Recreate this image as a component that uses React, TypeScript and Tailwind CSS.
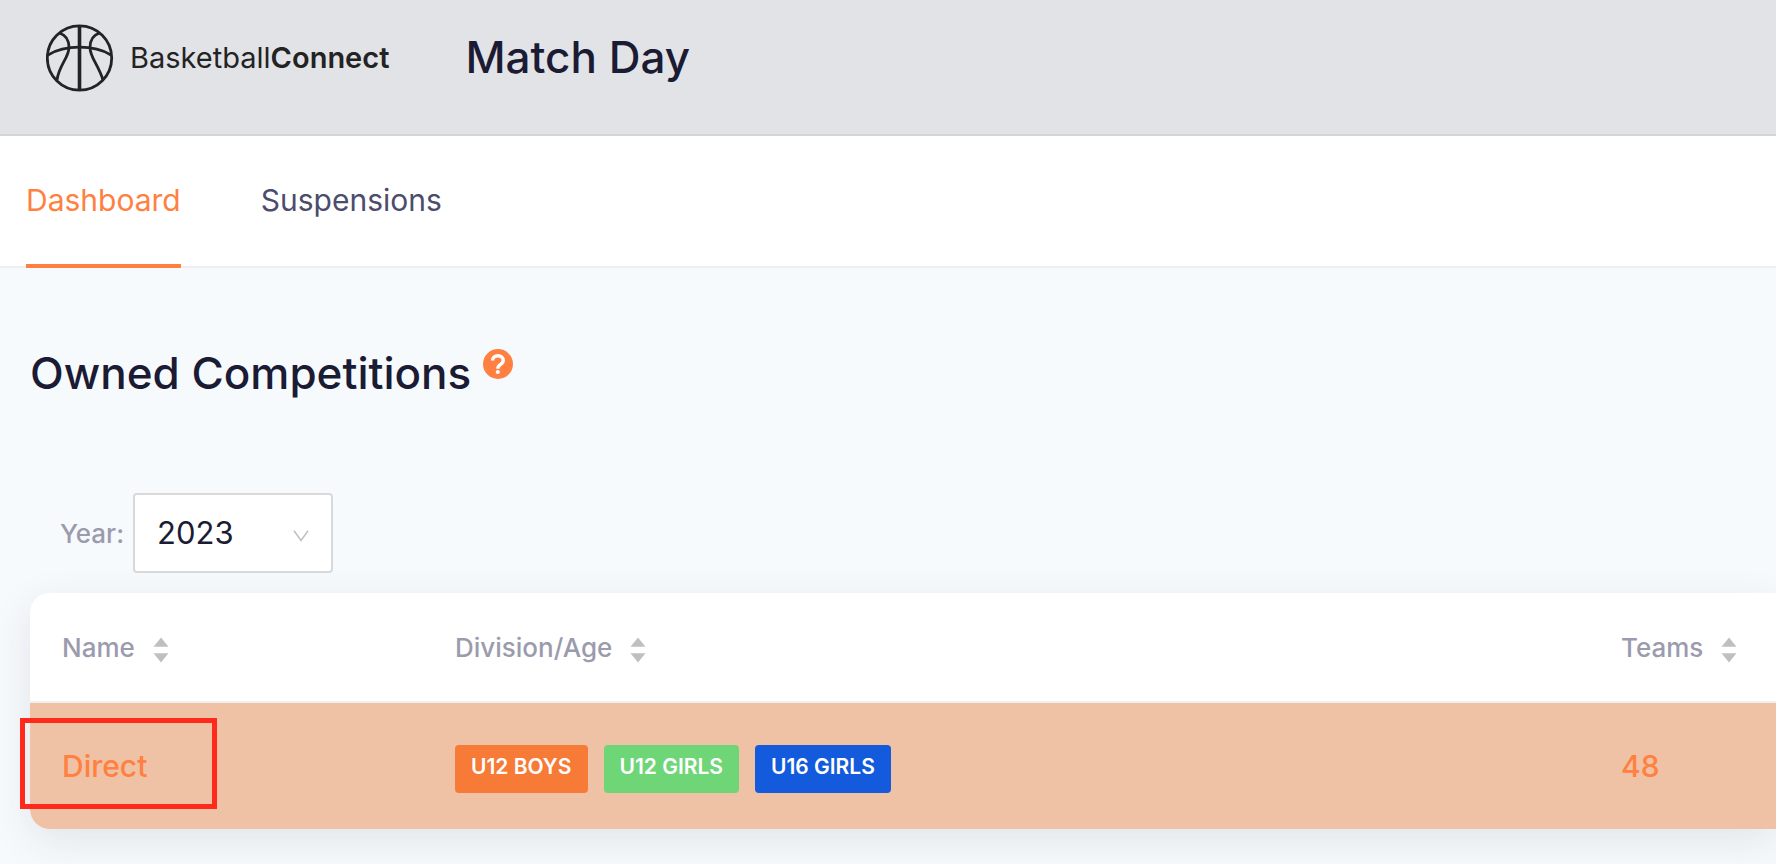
import { useState } from 'react';
import clsx from 'clsx';

interface Division {
  name: string;
  color: string;
}

interface Competition {
  id: number;
  name: string;
  divisions: Division[];
  teams: number;
}

type SortKey = 'name' | 'divisions' | 'teams';

const navItems = ['Dashboard', 'Suspensions'];

const years = ['2023', '2022', '2021'];

const columns: Array<{ key: SortKey; label: string; width: string }> = [
  { key: 'name', label: 'Name', width: 'w-[393px]' },
  { key: 'divisions', label: 'Division/Age', width: '' },
  { key: 'teams', label: 'Teams', width: 'w-[187px]' },
];

const competitions: Competition[] = [
  {
    id: 1,
    name: 'Direct',
    divisions: [
      { name: 'U12 BOYS', color: 'bg-[#f77a36]' },
      { name: 'U12 GIRLS', color: 'bg-[#6fd678]' },
      { name: 'U16 GIRLS', color: 'bg-[#135bdc]' },
    ],
    teams: 48,
  },
];

const sortValue = (item: Competition, key: SortKey) =>
  key === 'divisions' ? item.divisions.length : item[key];

const BallLogo = () => (
  <svg
    viewBox="0 0 68 68"
    className="h-[68px] w-[68px]"
    fill="none"
    stroke="#232323"
    strokeWidth="2.8"
    aria-hidden="true"
  >
    <circle cx="33.5" cy="34" r="32.2" />
    <path d="M33.5 2V66" strokeWidth="3.6" />
    <path d="M2 31C11 25.500 21 23.200 33.500 23.200S56 25.500 65 31" />
    <path d="M13.500 9C19.500 11 23 16 23 23.500C23 33.500 13 41 11 56" />
    <path d="M53.500 9C47.500 11 44 16 44 23.500C44 33.500 52 40 57 56" />
  </svg>
);

const SortIcon = () => (
  <svg viewBox="0 0 16 26" className="h-[26px] w-4" fill="#bfbfbf" aria-hidden="true">
    <path d="M8 0.500 15.500 9.700H0.500z" />
    <path d="M8 25.500 15.500 16.300H0.500z" />
  </svg>
);

const HelpIcon = () => (
  <svg viewBox="0 0 30 30" className="h-[30px] w-[30px]" fill="none" aria-hidden="true">
    <circle cx="15" cy="15" r="15" fill="#ff8040" />
    <path
      d="M9.600 11.600C9.600 8.700 11.800 6.700 14.900 6.700s5.300 2 5.300 4.700c0 2.200-1.400 3.200-2.900 4.200-1.600 1.100-2.500 1.800-2.500 4.200"
      stroke="#fff"
      strokeWidth="3.400"
    />
    <circle cx="14.800" cy="23" r="2.100" fill="#fff" />
  </svg>
);

const ChevronIcon = () => (
  <svg
    viewBox="0 0 16 12"
    className="pointer-events-none absolute top-[37px] right-6 h-3 w-4"
    fill="none"
    stroke="#bfbfbf"
    strokeWidth="1.500"
    aria-hidden="true"
  >
    <path d="M1 0.800 8 10.500 15 0.800" />
  </svg>
);

export default function App() {
  const [activeNav, setActiveNav] = useState('Dashboard');
  const [year, setYear] = useState('2023');
  const [sortKey, setSortKey] = useState<SortKey>('name');

  const rows = [...competitions].sort((a, b) =>
    sortValue(a, sortKey) > sortValue(b, sortKey) ? 1 : -1
  );

  return (
    <div className="min-h-screen overflow-hidden bg-[#f6fafd] pb-8 font-['Inter',sans-serif] text-[#1b1b34]">
      <header className="flex h-[136px] items-start border-b-2 border-[#d4d4d9] bg-[#e2e3e7] pt-6 pl-[46px]">
        <a href="#home" className="flex items-center gap-4 text-[#232323]">
          <BallLogo />
          <span className="text-[29px] leading-[68px]">
            Basketball<span className="font-semibold">Connect</span>
          </span>
        </a>
        <h1 className="ml-[76px] text-[44px] leading-[66px] font-medium">Match Day</h1>
      </header>

      <nav className="flex h-[132px] gap-20 border-b-2 border-[#f0f0f0] bg-white px-[26px]">
        {navItems.map((item) => (
          <a
            key={item}
            href={`#${item.toLowerCase()}`}
            onClick={() => setActiveNav(item)}
            className={clsx(
              '-mb-0.5 border-b-4 text-[30px] leading-[128px]',
              item === activeNav
                ? 'border-[#ff8040] text-[#ff8040]'
                : 'border-transparent text-[#4c4c6d]'
            )}
          >
            {item}
          </a>
        ))}
      </nav>

      <main className="pl-[30px]">
        <div className="flex items-start gap-3 pt-20">
          <h2 className="text-[44px] leading-[50px] font-medium">Owned Competitions</h2>
          <button type="button" aria-label="Help" className="pt-px">
            <HelpIcon />
          </button>
        </div>

        <div className="mt-[95px] flex items-center gap-[9px] pl-[30px]">
          <label htmlFor="year" className="text-[26px] font-medium text-[#9b9bad]">
            Year:
          </label>
          <div className="relative">
            <select
              id="year"
              value={year}
              onChange={(e) => setYear(e.target.value)}
              className="h-20 w-[200px] appearance-none rounded-sm border-2 border-[#d9d9d9] bg-white pl-[22px] text-[31px]"
            >
              {years.map((option) => (
                <option key={option}>{option}</option>
              ))}
            </select>
            <ChevronIcon />
          </div>
        </div>

        <div className="mt-5 rounded-l-[20px] bg-white shadow-[0_12px_40px_rgba(50,50,60,0.1)]">
          <table className="w-full table-fixed border-separate border-spacing-0 text-left">
            <thead>
              <tr className="h-[110px]">
                {columns.map((column) => (
                  <th
                    key={column.key}
                    className={clsx('border-b-2 border-[#f0f0f0] pl-8', column.width)}
                  >
                    <button
                      type="button"
                      onClick={() => setSortKey(column.key)}
                      className="flex items-center gap-[18px] text-[26px] font-medium text-[#9b9bad]"
                    >
                      {column.label}
                      <span className="pt-1.5">
                        <SortIcon />
                      </span>
                    </button>
                  </th>
                ))}
              </tr>
            </thead>
            <tbody>
              {rows.map((item) => (
                <tr key={item.id} className="h-[126px]">
                  <td className="relative rounded-bl-[20px] bg-[#efc2a5] pl-8 text-[30px] font-medium text-[#ff8040]">
                    <a href="#direct">{item.name}</a>
                    <div className="pointer-events-none absolute top-[15px] -left-2.5 h-[91px] w-[197px] border-5 border-[#ff2a1c]" />
                  </td>
                  <td className="bg-[#efc2a5] pl-8">
                    <div className="flex gap-4 pt-1.5">
                      {item.divisions.map((division) => (
                        <span
                          key={division.name}
                          className={clsx(
                            'h-12 rounded-sm px-4 text-[21px] leading-[44px] font-semibold text-white',
                            division.color
                          )}
                        >
                          {division.name}
                        </span>
                      ))}
                    </div>
                  </td>
                  <td className="bg-[#efc2a5] pl-8 text-[30px] font-medium text-[#ff8040]">
                    <a href="#teams">{item.teams}</a>
                  </td>
                </tr>
              ))}
            </tbody>
          </table>
        </div>
      </main>
    </div>
  );
}
